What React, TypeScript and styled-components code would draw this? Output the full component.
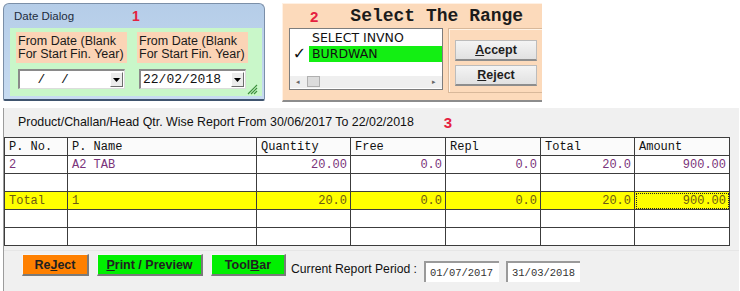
import React from 'react';
import styled, { createGlobalStyle } from 'styled-components';

const GlobalStyle = createGlobalStyle`
  html, body {
    margin: 0;
    padding: 0;
    background: #ffffff;
  }
  body {
    width: 740px;
    height: 291px;
    overflow: hidden;
    font-family: "Liberation Sans", Arial, sans-serif;
  }
`;

const Page = styled.div`
  display: flex;
  flex-direction: column;
  width: 740px;
  height: 291px;
`;

const TopRow = styled.div`
  display: flex;
  align-items: flex-start;
  gap: 17px;
  height: 105px;
  padding: 3px 0 0 3px;
  box-sizing: border-box;
`;

const Marker = styled.span<{ $gap?: number; $size?: number }>`
  color: #e5213f;
  font-family: "Liberation Sans", Arial, sans-serif;
  font-weight: bold;
  font-size: ${(p) => p.$size || 14}px;
  margin-left: ${(p) => p.$gap || 0}px;
`;

/* ---------- 1: date dialog ---------- */

const DialogWindow = styled.div`
  width: 262px;
  height: 98px;
  box-sizing: border-box;
  border: 1px solid #7b8fa8;
  border-bottom: 2px solid #3f546e;
  border-radius: 6px 6px 2px 2px;
  background: linear-gradient(#b5cde8, #c7dbf1);
  display: flex;
  flex-direction: column;
  padding: 0 2px 3px 6px;
`;

const DialogTitle = styled.div`
  height: 24px;
  display: flex;
  align-items: center;
  padding-left: 4px;
  font-size: 11.5px;
  color: #1d2b3d;
`;

const DialogBody = styled.div`
  position: relative;
  height: 68px;
  background: #c9f7c9;
  display: grid;
  grid-template-columns: 111px 111px;
  column-gap: 10px;
  padding: 4px 0 0 6px;
  box-sizing: border-box;
`;

const Field = styled.div`
  display: flex;
  flex-direction: column;
  gap: 6px;
`;

const FieldLabel = styled.div`
  height: 31px;
  background: #fbd4b6;
  padding: 3px 0 0 2px;
  box-sizing: border-box;
  font-size: 12.5px;
  line-height: 13px;
  color: #1a1a1a;
`;

const Combo = styled.div`
  width: 107px;
  height: 20px;
  margin-left: 2px;
  box-sizing: border-box;
  background: #ffffff;
  border-top: 2px solid #8a8a8a;
  border-left: 2px solid #8a8a8a;
  border-right: 1px solid #dcdcdc;
  border-bottom: 1px solid #dcdcdc;
  display: flex;
  align-items: center;
  justify-content: space-between;
  font-family: "Liberation Mono", "Courier New", monospace;
  font-size: 13px;
  color: #111;
  padding-left: 2px;
`;

const DropButton = styled.div`
  width: 13px;
  height: 15px;
  margin-right: 1px;
  box-sizing: border-box;
  background: #ececec;
  border: 1px solid #ffffff;
  border-right-color: #6d6d6d;
  border-bottom-color: #6d6d6d;
  display: flex;
  align-items: center;
  justify-content: center;
`;

const Grip = styled.svg`
  position: absolute;
  right: 4px;
  bottom: 1px;
`;

const DropArrow = () => (
  <svg width="7" height="4" viewBox="0 0 7 4">
    <path d="M0 0 L7 0 L3.5 4 Z" fill="#000" />
  </svg>
);

/* ---------- 2: select the range ---------- */

const RangePanel = styled.div`
  width: 260px;
  height: 99px;
  box-sizing: border-box;
  background: #fcdabb;
  border-top: 1px solid #fff1e4;
  border-left: 1px solid #fff1e4;
  border-bottom: 2px solid #8c8c8c;
  display: flex;
  flex-direction: column;
  padding-left: 6px;
`;

const RangeHeader = styled.div`
  height: 24px;
  display: flex;
  align-items: center;
  padding-left: 21px;
`;

const RangeTitle = styled.span`
  margin-left: 32px;
  font-family: "Liberation Mono", "Courier New", monospace;
  font-weight: bold;
  font-size: 18px;
  color: #1b1b1b;
`;

const RangeBody = styled.div`
  display: flex;
  align-items: flex-start;
  gap: 5px;
`;

const ListBox = styled.div`
  width: 154px;
  height: 62px;
  box-sizing: border-box;
  background: #ffffff;
  border: 1px solid #7d7d7d;
  display: flex;
  flex-direction: column;
  padding-top: 1px;
`;

const ListItem = styled.div`
  height: 16px;
  display: flex;
  align-items: center;
`;

const Check = styled.span`
  width: 19px;
  text-align: center;
  font-size: 16px;
  font-weight: bold;
  line-height: 16px;
  color: #111;
  font-family: "DejaVu Sans", sans-serif;
`;

const ItemText = styled.span<{ $selected?: boolean }>`
  flex: 1;
  height: 16px;
  line-height: 16px;
  padding-left: 3px;
  font-family: "DejaVu Sans", Verdana, sans-serif;
  font-size: 12.5px;
  color: #111;
  background: ${(p) => (p.$selected ? '#13ef13' : 'transparent')};
`;

const HScroll = styled.div`
  margin-top: auto;
  margin-bottom: 1px;
  height: 12px;
  background: #efefef;
  display: flex;
  align-items: center;
  justify-content: space-between;
  padding: 0 6px 0 6px;
  font-size: 7px;
  color: #666;
  position: relative;
`;

const Thumb = styled.div`
  position: absolute;
  left: 17px;
  top: 0;
  width: 13px;
  height: 11px;
  background: #dcdcdc;
  border: 1px solid #b0b0b0;
  box-sizing: border-box;
`;

const GroupBox = styled.div`
  width: 94px;
  height: 65px;
  box-sizing: border-box;
  border: 1px solid #d8b89a;
  border-right: none;
  box-shadow: inset 1px 1px 0 #fff3e6;
  display: flex;
  flex-direction: column;
  gap: 4px;
  padding: 11px 0 0 6px;
`;

const PanelButton = styled.div`
  width: 82px;
  height: 21px;
  box-sizing: border-box;
  background: linear-gradient(#f4f4f4, #e1e1e1);
  border: 1px solid #bcbcbc;
  border-bottom: 2px solid #8d8d8d;
  display: flex;
  align-items: center;
  justify-content: center;
  font-weight: bold;
  font-size: 12.5px;
  color: #1e1e1e;
`;

/* ---------- 3: report ---------- */

const ReportSection = styled.div`
  margin: 3px 0 0 3px;
  width: 735px;
  flex: 1;
  background: #f0f0f0;
  border-left: 1px solid #9c9c9c;
  display: flex;
  flex-direction: column;
`;

const ReportTitle = styled.div`
  height: 29px;
  display: flex;
  align-items: center;
  padding: 0 0 1px 14px;
  box-sizing: border-box;
  font-size: 12.4px;
  color: #111;
`;

const Grid = styled.table`
  border-collapse: collapse;
  table-layout: fixed;
  width: 725px;
  font-family: "Liberation Mono", "Courier New", monospace;
  font-size: 12px;
`;

const Row = styled.tr<{ $total?: boolean }>`
  height: 18px;
  background: ${(p) => (p.$total ? '#ffff00' : '#ffffff')};
  color: ${(p) => (p.$total ? '#6c5a12' : '#7a347a')};
`;

const HeadCell = styled.th`
  border: 1px solid #3c3c3c;
  padding: 0 4px;
  text-align: left;
  font-weight: normal;
  color: #111;
  background: #fbfbfb;
  line-height: 16px;
`;

const Cell = styled.td<{ $num?: boolean; $focus?: boolean }>`
  border: 1px solid #3c3c3c;
  padding: 0 3px 0 4px;
  text-align: ${(p) => (p.$num ? 'right' : 'left')};
  line-height: 16px;
  white-space: nowrap;
  overflow: hidden;
  outline: ${(p) => (p.$focus ? '1px dotted #222' : 'none')};
  outline-offset: -2px;
`;

const Footer = styled.div`
  display: flex;
  align-items: flex-start;
  padding: 3px 0 0 18px;
  border-top: 1px solid #e6e6e6;
  margin-top: 4px;
`;

const ActionButton = styled.div<{ $color: string; $width: number }>`
  width: ${(p) => p.$width}px;
  height: 22px;
  margin-right: 8px;
  box-sizing: border-box;
  background: ${(p) => p.$color};
  border: 1px solid #f5f5f5;
  border-right: 2px solid #7a7a7a;
  border-bottom: 2px solid #7a7a7a;
  display: flex;
  align-items: center;
  justify-content: center;
  font-weight: bold;
  font-size: 12.5px;
  color: #202020;
`;

const PeriodLabel = styled.span`
  margin: 8px 0 0 -3px;
  font-size: 12.2px;
  color: #111;
`;

const PeriodBox = styled.div`
  margin: 7px 0 0 7px;
  width: 75px;
  height: 21px;
  box-sizing: border-box;
  background: #ffffff;
  border-top: 2px solid #9a9a9a;
  border-left: 2px solid #9a9a9a;
  display: flex;
  align-items: center;
  padding-left: 4px;
  font-family: "Liberation Mono", "Courier New", monospace;
  font-size: 10.5px;
  color: #333;

  & + & {
    margin-left: 7px;
    width: 74px;
  }
`;

type Line = { no: string; name: string; qty: string; free: string; repl: string; total: string; amount: string };

const columns = [
  { title: 'P. No.', width: 63 },
  { title: 'P. Name', width: 189 },
  { title: 'Quantity', width: 94 },
  { title: 'Free', width: 95 },
  { title: 'Repl', width: 95 },
  { title: 'Total', width: 94 },
  { title: 'Amount', width: 95 },
];

const lines: Line[] = [
  { no: '2', name: 'A2 TAB', qty: '20.00', free: '0.0', repl: '0.0', total: '20.0', amount: '900.00' },
];

const totalLine: Line = { no: 'Total', name: '1', qty: '20.0', free: '0.0', repl: '0.0', total: '20.0', amount: '900.00' };

const Underline = styled.span`
  text-decoration: underline;
`;

const DataRow: React.FC<{ line?: Line; total?: boolean }> = ({ line, total }) => (
  <Row $total={total}>
    <Cell>{line?.no}</Cell>
    <Cell>{line?.name}</Cell>
    <Cell $num>{line?.qty}</Cell>
    <Cell $num>{line?.free}</Cell>
    <Cell $num>{line?.repl}</Cell>
    <Cell $num>{line?.total}</Cell>
    <Cell $num $focus={total}>{line?.amount}</Cell>
  </Row>
);

const App: React.FC = () => {
  return (
    <Page>
      <GlobalStyle />
      <TopRow>
        <DialogWindow>
          <DialogTitle>
            Date Dialog
            <Marker $gap={58}>1</Marker>
          </DialogTitle>
          <DialogBody>
            <Field>
              <FieldLabel>
                From Date (Blank
                <br />
                For Start Fin. Year)
              </FieldLabel>
              <Combo>
                <span>&nbsp;&nbsp;/&nbsp;&nbsp;/</span>
                <DropButton>
                  <DropArrow />
                </DropButton>
              </Combo>
            </Field>
            <Field>
              <FieldLabel>
                From Date (Blank
                <br />
                For Start Fin. Year)
              </FieldLabel>
              <Combo>
                <span>22/02/2018</span>
                <DropButton>
                  <DropArrow />
                </DropButton>
              </Combo>
            </Field>
            <Grip width="12" height="12" viewBox="0 0 12 12">
              <path d="M11 2 L2 11 M11 5 L5 11 M11 8 L8 11" stroke="#3d8f3d" strokeWidth="1.2" />
            </Grip>
          </DialogBody>
        </DialogWindow>

        <RangePanel>
          <RangeHeader>
            <Marker $size={15}>2</Marker>
            <RangeTitle>Select The Range</RangeTitle>
          </RangeHeader>
          <RangeBody>
            <ListBox>
              <ListItem>
                <Check />
                <ItemText>SELECT INVNO</ItemText>
              </ListItem>
              <ListItem>
                <Check>✓</Check>
                <ItemText $selected>BURDWAN</ItemText>
              </ListItem>
              <HScroll>
                <span>◂</span>
                <Thumb />
                <span>▸</span>
              </HScroll>
            </ListBox>
            <GroupBox>
              <PanelButton>
                <Underline>A</Underline>ccept
              </PanelButton>
              <PanelButton>
                <Underline>R</Underline>eject
              </PanelButton>
            </GroupBox>
          </RangeBody>
        </RangePanel>
      </TopRow>

      <ReportSection>
        <ReportTitle>
          Product/Challan/Head Qtr. Wise Report From 30/06/2017 To 22/02/2018
          <Marker $gap={30} $size={15}>3</Marker>
        </ReportTitle>
        <Grid>
          <colgroup>
            {columns.map((c) => (
              <col key={c.title} style={{ width: c.width }} />
            ))}
          </colgroup>
          <thead>
            <Row>
              {columns.map((c) => (
                <HeadCell key={c.title}>{c.title}</HeadCell>
              ))}
            </Row>
          </thead>
          <tbody>
            {lines.map((l) => (
              <DataRow key={l.no} line={l} />
            ))}
            <DataRow />
            <DataRow line={totalLine} total />
            <DataRow />
            <DataRow />
          </tbody>
        </Grid>
        <Footer>
          <ActionButton $color="#ff8000" $width={67}>
            Re<Underline>J</Underline>ect
          </ActionButton>
          <ActionButton $color="#00f000" $width={106}>
            <Underline>P</Underline>rint / Preview
          </ActionButton>
          <ActionButton $color="#00f000" $width={75}>
            Tool<Underline>B</Underline>ar
          </ActionButton>
          <PeriodLabel>Current Report Period :</PeriodLabel>
          <PeriodBox>01/07/2017</PeriodBox>
          <PeriodBox>31/03/2018</PeriodBox>
        </Footer>
      </ReportSection>
    </Page>
  );
};

export default App;
